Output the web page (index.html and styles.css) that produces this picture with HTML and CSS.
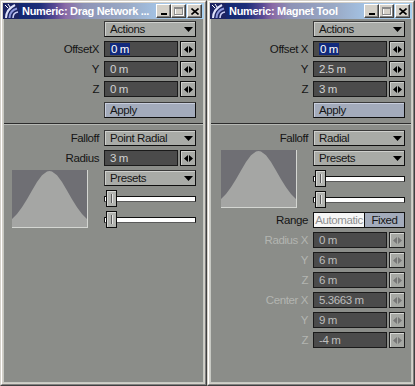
FILE: index.html
```html
<!DOCTYPE html>
<html>
<head>
<meta charset="utf-8">
<link rel="stylesheet" href="styles.css">
</head>
<body>
<div class="desk">
  <section class="win w-left">
    <div class="frame">
      <header class="title">
        <span class="ticon"><svg width="16" height="16" viewBox="0 0 16 16"><rect width="16" height="16" fill="#1c2462"/><path d="M3 15 C3 9 6 5 12 2" stroke="#dfe2fb" stroke-width="2" fill="none"/><path d="M6.5 15 C6.5 10 9 7 14 5.5" stroke="#8e98dc" stroke-width="2" fill="none"/><path d="M10 15 C10 11.5 11.5 9.5 15 9" stroke="#c9cdf3" stroke-width="1.6" fill="none"/><path d="M2 2 L5 5 M5 1 L7 4" stroke="#ffffff" stroke-width="1"/></svg></span>
        <span class="ttext">Numeric: Drag Network ...</span>
        <span class="tbtns">
          <span class="tb"><svg width="8" height="8" viewBox="0 0 8 8"><rect x="1" y="6" width="6" height="2" fill="#000"/></svg></span>
          <span class="tb"><svg width="10" height="9" viewBox="0 0 10 9"><rect x="1.5" y="1.5" width="8" height="7" fill="none" stroke="#fff"/><rect x="0.5" y="0.5" width="8" height="7" fill="none" stroke="#8a8a8a"/><rect x="0" y="0" width="9" height="2" fill="#8a8a8a"/></svg></span>
          <span class="tb tb-close"><svg width="8" height="7" viewBox="0 0 8 7"><path d="M0.5 0.5 L7.5 6.5 M7.5 0.5 L0.5 6.5" stroke="#000" stroke-width="1.6"/></svg></span>
        </span>
      </header>
      <div class="panel">
        <div class="sec">
          <div class="row"><span class="lbl"></span><div class="drop"><span>Actions</span><svg class="arr" width="9" height="5" viewBox="0 0 9 5"><path d="M0 0 H9 L4.5 5 Z" fill="#000"/></svg></div></div>
          <div class="row"><span class="lbl">OffsetX</span><div class="num"><span class="field"><span class="sel">0 m</span></span><span class="spin"><svg width="9" height="7" viewBox="0 0 9 7"><path d="M0 3.5 L4 0 V7 Z M5 0 L9 3.5 L5 7 Z" fill="#000"/></svg></span></div></div>
          <div class="row"><span class="lbl">Y</span><div class="num"><span class="field">0 m</span><span class="spin"><svg width="9" height="7" viewBox="0 0 9 7"><path d="M0 3.5 L4 0 V7 Z M5 0 L9 3.5 L5 7 Z" fill="#000"/></svg></span></div></div>
          <div class="row"><span class="lbl">Z</span><div class="num"><span class="field">0 m</span><span class="spin"><svg width="9" height="7" viewBox="0 0 9 7"><path d="M0 3.5 L4 0 V7 Z M5 0 L9 3.5 L5 7 Z" fill="#000"/></svg></span></div></div>
          <div class="row row-apply"><span class="lbl"></span><div class="btn apply">Apply</div></div>
        </div>
        <div class="sep"></div>
        <div class="sec">
          <div class="row"><span class="lbl">Falloff</span><div class="drop"><span>Point Radial</span><svg class="arr" width="9" height="5" viewBox="0 0 9 5"><path d="M0 0 H9 L4.5 5 Z" fill="#000"/></svg></div></div>
          <div class="row"><span class="lbl">Radius</span><div class="num"><span class="field">3 m</span><span class="spin"><svg width="9" height="7" viewBox="0 0 9 7"><path d="M0 3.5 L4 0 V7 Z M5 0 L9 3.5 L5 7 Z" fill="#000"/></svg></span></div></div>
          <div class="combo combo-left">
            <div class="graph"><svg width="75" height="57" viewBox="0 0 75 57"><path d="M0 57 L0 49 L5 44 L10 37.3 L15 29.2 L20 20.4 L25 12 L30 5.2 L35 1.5 L37.5 1 L40 1.5 L45 5.2 L50 12 L55 20.4 L60 29.2 L65 37.3 L70 44 L75 49 L75 57 Z" fill="#a5a6a4"/></svg></div>
            <div class="stack">
              <div class="drop"><span>Presets</span><svg class="arr" width="9" height="5" viewBox="0 0 9 5"><path d="M0 0 H9 L4.5 5 Z" fill="#000"/></svg></div>
              <div class="slider"><div class="track"></div><span class="knob"></span></div>
              <div class="slider"><div class="track"></div><span class="knob"></span></div>
            </div>
          </div>
        </div>
      </div>
    </div>
  </section>

  <section class="win w-right">
    <div class="frame">
      <header class="title">
        <span class="ticon"><svg width="16" height="16" viewBox="0 0 16 16"><rect width="16" height="16" fill="#1c2462"/><path d="M3 15 C3 9 6 5 12 2" stroke="#dfe2fb" stroke-width="2" fill="none"/><path d="M6.5 15 C6.5 10 9 7 14 5.5" stroke="#8e98dc" stroke-width="2" fill="none"/><path d="M10 15 C10 11.5 11.5 9.5 15 9" stroke="#c9cdf3" stroke-width="1.6" fill="none"/><path d="M2 2 L5 5 M5 1 L7 4" stroke="#ffffff" stroke-width="1"/></svg></span>
        <span class="ttext">Numeric: Magnet Tool</span>
        <span class="tbtns">
          <span class="tb"><svg width="8" height="8" viewBox="0 0 8 8"><rect x="1" y="6" width="6" height="2" fill="#000"/></svg></span>
          <span class="tb"><svg width="10" height="9" viewBox="0 0 10 9"><rect x="1.5" y="1.5" width="8" height="7" fill="none" stroke="#fff"/><rect x="0.5" y="0.5" width="8" height="7" fill="none" stroke="#8a8a8a"/><rect x="0" y="0" width="9" height="2" fill="#8a8a8a"/></svg></span>
          <span class="tb tb-close"><svg width="8" height="7" viewBox="0 0 8 7"><path d="M0.5 0.5 L7.5 6.5 M7.5 0.5 L0.5 6.5" stroke="#000" stroke-width="1.6"/></svg></span>
        </span>
      </header>
      <div class="panel">
        <div class="sec">
          <div class="row"><span class="lbl"></span><div class="drop"><span>Actions</span><svg class="arr" width="9" height="5" viewBox="0 0 9 5"><path d="M0 0 H9 L4.5 5 Z" fill="#000"/></svg></div></div>
          <div class="row"><span class="lbl">Offset X</span><div class="num"><span class="field"><span class="sel">0 m</span></span><span class="spin"><svg width="9" height="7" viewBox="0 0 9 7"><path d="M0 3.5 L4 0 V7 Z M5 0 L9 3.5 L5 7 Z" fill="#000"/></svg></span></div></div>
          <div class="row"><span class="lbl">Y</span><div class="num"><span class="field">2.5 m</span><span class="spin"><svg width="9" height="7" viewBox="0 0 9 7"><path d="M0 3.5 L4 0 V7 Z M5 0 L9 3.5 L5 7 Z" fill="#000"/></svg></span></div></div>
          <div class="row"><span class="lbl">Z</span><div class="num"><span class="field">3 m</span><span class="spin"><svg width="9" height="7" viewBox="0 0 9 7"><path d="M0 3.5 L4 0 V7 Z M5 0 L9 3.5 L5 7 Z" fill="#000"/></svg></span></div></div>
          <div class="row row-apply"><span class="lbl"></span><div class="btn apply">Apply</div></div>
        </div>
        <div class="sep"></div>
        <div class="sec">
          <div class="row"><span class="lbl">Falloff</span><div class="drop"><span>Radial</span><svg class="arr" width="9" height="5" viewBox="0 0 9 5"><path d="M0 0 H9 L4.5 5 Z" fill="#000"/></svg></div></div>
          <div class="combo combo-right">
            <div class="graph"><svg width="75" height="57" viewBox="0 0 75 57"><path d="M0 57 L0 49 L5 44 L10 37.3 L15 29.2 L20 20.4 L25 12 L30 5.2 L35 1.5 L37.5 1 L40 1.5 L45 5.2 L50 12 L55 20.4 L60 29.2 L65 37.3 L70 44 L75 49 L75 57 Z" fill="#a5a6a4"/></svg></div>
            <div class="stack">
              <div class="drop"><span>Presets</span><svg class="arr" width="9" height="5" viewBox="0 0 9 5"><path d="M0 0 H9 L4.5 5 Z" fill="#000"/></svg></div>
              <div class="slider"><div class="track"></div><span class="knob"></span></div>
              <div class="slider"><div class="track"></div><span class="knob"></span></div>
            </div>
          </div>
          <div class="row"><span class="lbl">Range</span><div class="toggle"><span class="opt opt-auto">Automatic</span><span class="opt opt-fixed">Fixed</span></div></div>
          <div class="row dis"><span class="lbl">Radius X</span><div class="num"><span class="field">0 m</span><span class="spin"><svg width="9" height="7" viewBox="0 0 9 7"><path d="M0 3.5 L4 0 V7 Z M5 0 L9 3.5 L5 7 Z" fill="#777"/></svg></span></div></div>
          <div class="row dis"><span class="lbl">Y</span><div class="num"><span class="field">6 m</span><span class="spin"><svg width="9" height="7" viewBox="0 0 9 7"><path d="M0 3.5 L4 0 V7 Z M5 0 L9 3.5 L5 7 Z" fill="#777"/></svg></span></div></div>
          <div class="row dis"><span class="lbl">Z</span><div class="num"><span class="field">6 m</span><span class="spin"><svg width="9" height="7" viewBox="0 0 9 7"><path d="M0 3.5 L4 0 V7 Z M5 0 L9 3.5 L5 7 Z" fill="#777"/></svg></span></div></div>
          <div class="row dis"><span class="lbl">Center X</span><div class="num"><span class="field">5.3663 m</span><span class="spin"><svg width="9" height="7" viewBox="0 0 9 7"><path d="M0 3.5 L4 0 V7 Z M5 0 L9 3.5 L5 7 Z" fill="#777"/></svg></span></div></div>
          <div class="row dis"><span class="lbl">Y</span><div class="num"><span class="field">9 m</span><span class="spin"><svg width="9" height="7" viewBox="0 0 9 7"><path d="M0 3.5 L4 0 V7 Z M5 0 L9 3.5 L5 7 Z" fill="#777"/></svg></span></div></div>
          <div class="row dis"><span class="lbl">Z</span><div class="num"><span class="field">-4 m</span><span class="spin"><svg width="9" height="7" viewBox="0 0 9 7"><path d="M0 3.5 L4 0 V7 Z M5 0 L9 3.5 L5 7 Z" fill="#777"/></svg></span></div></div>
        </div>
      </div>
    </div>
  </section>
</div>
</body>
</html>
```

FILE: styles.css
```css
* { box-sizing: border-box; margin: 0; padding: 0; }
html, body { width: 415px; height: 386px; overflow: hidden; background: #d4d0c8; }
body {
  font-family: "Liberation Sans", Arial, sans-serif;
  font-size: 11.5px;
  letter-spacing: -0.4px;
  color: #151515;
}
.desk { display: flex; height: 386px; }
.win {
  height: 386px;
  border: 1px solid;
  border-color: #d4d0c8 #404040 #404040 #d4d0c8;
  background: #d4d0c8;
}
.w-left { width: 207px; --pr: 7px; }
.w-right { width: 208px; --pr: 6px; }
.frame {
  height: 100%;
  border: 1px solid;
  border-color: #ffffff #808080 #808080 #ffffff;
  padding: 1px;
  display: flex;
  flex-direction: column;
}
.title {
  height: 16px;
  flex: none;
  display: flex;
  align-items: center;
  background: linear-gradient(90deg, #0c2168 0%, #1b2e7a 18%, #5a4a94 26%, #8a6aa6 31%, #8d93b6 40%, #9aaac6 62%, #a4c4e6 78%, #a9d0f0 100%);
}
.ticon { width: 16px; height: 16px; flex: none; display: block; }
.ticon svg { display: block; }
.ttext {
  flex: 1;
  margin-left: 3px;
  font-family: "Liberation Sans", Arial, sans-serif;
  font-weight: bold;
  font-size: 11px;
  letter-spacing: -0.3px;
  color: #ffffff;
  white-space: nowrap;
  overflow: hidden;
  line-height: 16px;
}
.tbtns { display: flex; margin-right: 2px; flex: none; }
.tb {
  width: 15px;
  height: 14px;
  background: #d4d0c8;
  border: 1px solid;
  border-color: #ffffff #404040 #404040 #ffffff;
  box-shadow: inset -1px -1px 0 #808080;
  display: flex;
  align-items: center;
  justify-content: center;
}
.tb svg { display: block; }
.tb-close { margin-left: 1px; }
.panel {
  flex: 1;
  background: #8b8d89;
  border: 1px solid #c7c9c3;
  border-top: 0;
  padding-top: 2px;
}
.sec { display: flex; flex-direction: column; gap: 4px; }
.row {
  display: grid;
  grid-template-columns: 1fr 92px;
  column-gap: 5px;
  height: 16px;
  padding-right: var(--pr);
  align-items: center;
}
.row-apply { margin-top: 1px; }
.lbl { text-align: right; white-space: nowrap; line-height: 16px; }
.dis .lbl { color: #b3b5b1; }
.drop, .btn {
  height: 16px;
  background: #a9aba7;
  border: 1px solid;
  border-color: #3a3a3a #0e0e0e #0e0e0e #3a3a3a;
  box-shadow: inset 1px 1px 0 #cfd0cd;
  display: flex;
  align-items: center;
  justify-content: space-between;
  padding: 0 2px 0 5px;
  line-height: 14px;
  white-space: nowrap;
}
.arr { display: block; flex: none; }
.apply { background: #a3abbb; box-shadow: inset 1px 1px 0 #c8cede; }
.num { display: flex; gap: 2px; height: 16px; }
.field {
  width: 74px;
  height: 16px;
  background: #4b4b4b;
  border: 1px solid #1a1a1a;
  color: #d2d2d2;
  padding-left: 5px;
  line-height: 14px;
  white-space: nowrap;
}
.dis .field { color: #bdbdbd; }
.sel { background: #122a7c; color: #ffffff; padding: 0 1px; display: inline-block; line-height: 12px; }
.spin {
  width: 16px;
  height: 16px;
  background: #a9aba7;
  border: 1px solid #0e0e0e;
  box-shadow: inset 1px 1px 0 #cfd0cd;
  display: flex;
  align-items: center;
  justify-content: center;
}
.dis .spin { border-color: #1e1e1e; box-shadow: inset 1px 1px 0 #d8d9d6; background: #a6a8a4; }
.spin svg { display: block; }
.sep {
  height: 2px;
  border-top: 1px solid #2c2c2c;
  border-bottom: 1px solid #b6b8b4;
  margin: 5px 0;
}
.combo {
  display: flex;
  justify-content: space-between;
  padding-right: var(--pr);
}
.combo-left { padding-left: 8px; }
.combo-right { padding-left: 10px; }
.graph {
  width: 76px;
  height: 58px;
  background: #6f6f74;
  border-right: 1px solid #d4d6d2;
  border-bottom: 1px solid #d4d6d2;
}
.graph svg { display: block; }
.stack { width: 92px; display: flex; flex-direction: column; gap: 4px; }
.slider {
  position: relative;
  height: 17px;
  display: flex;
  align-items: center;
}
.track {
  flex: 1;
  height: 6px;
  background: #ffffff;
  border: 1px solid #101010;
  border-bottom-color: #5a5a5a;
}
.knob {
  position: absolute;
  left: 2px;
  top: 0;
  width: 11px;
  height: 17px;
  background: #b2b4b0;
  border: 1px solid #0e0e0e;
  box-shadow: inset 1px 1px 0 #d6d7d4;
}
.knob::after {
  content: "";
  position: absolute;
  left: 4px;
  top: 3px;
  width: 1px;
  height: 9px;
  background: #5c5c5c;
  box-shadow: 1px 0 0 #e4e4e4;
}
.toggle { display: flex; height: 16px; }
.opt {
  height: 16px;
  border: 1px solid #121212;
  display: flex;
  align-items: center;
  justify-content: center;
  line-height: 14px;
  white-space: nowrap;
  overflow: hidden;
}
.opt-auto { width: 52px; background: #f6f6f6; color: #8e8e8e; }
.opt-fixed { flex: 1; background: #a3abbb; color: #151515; border-left: 0; }
```
